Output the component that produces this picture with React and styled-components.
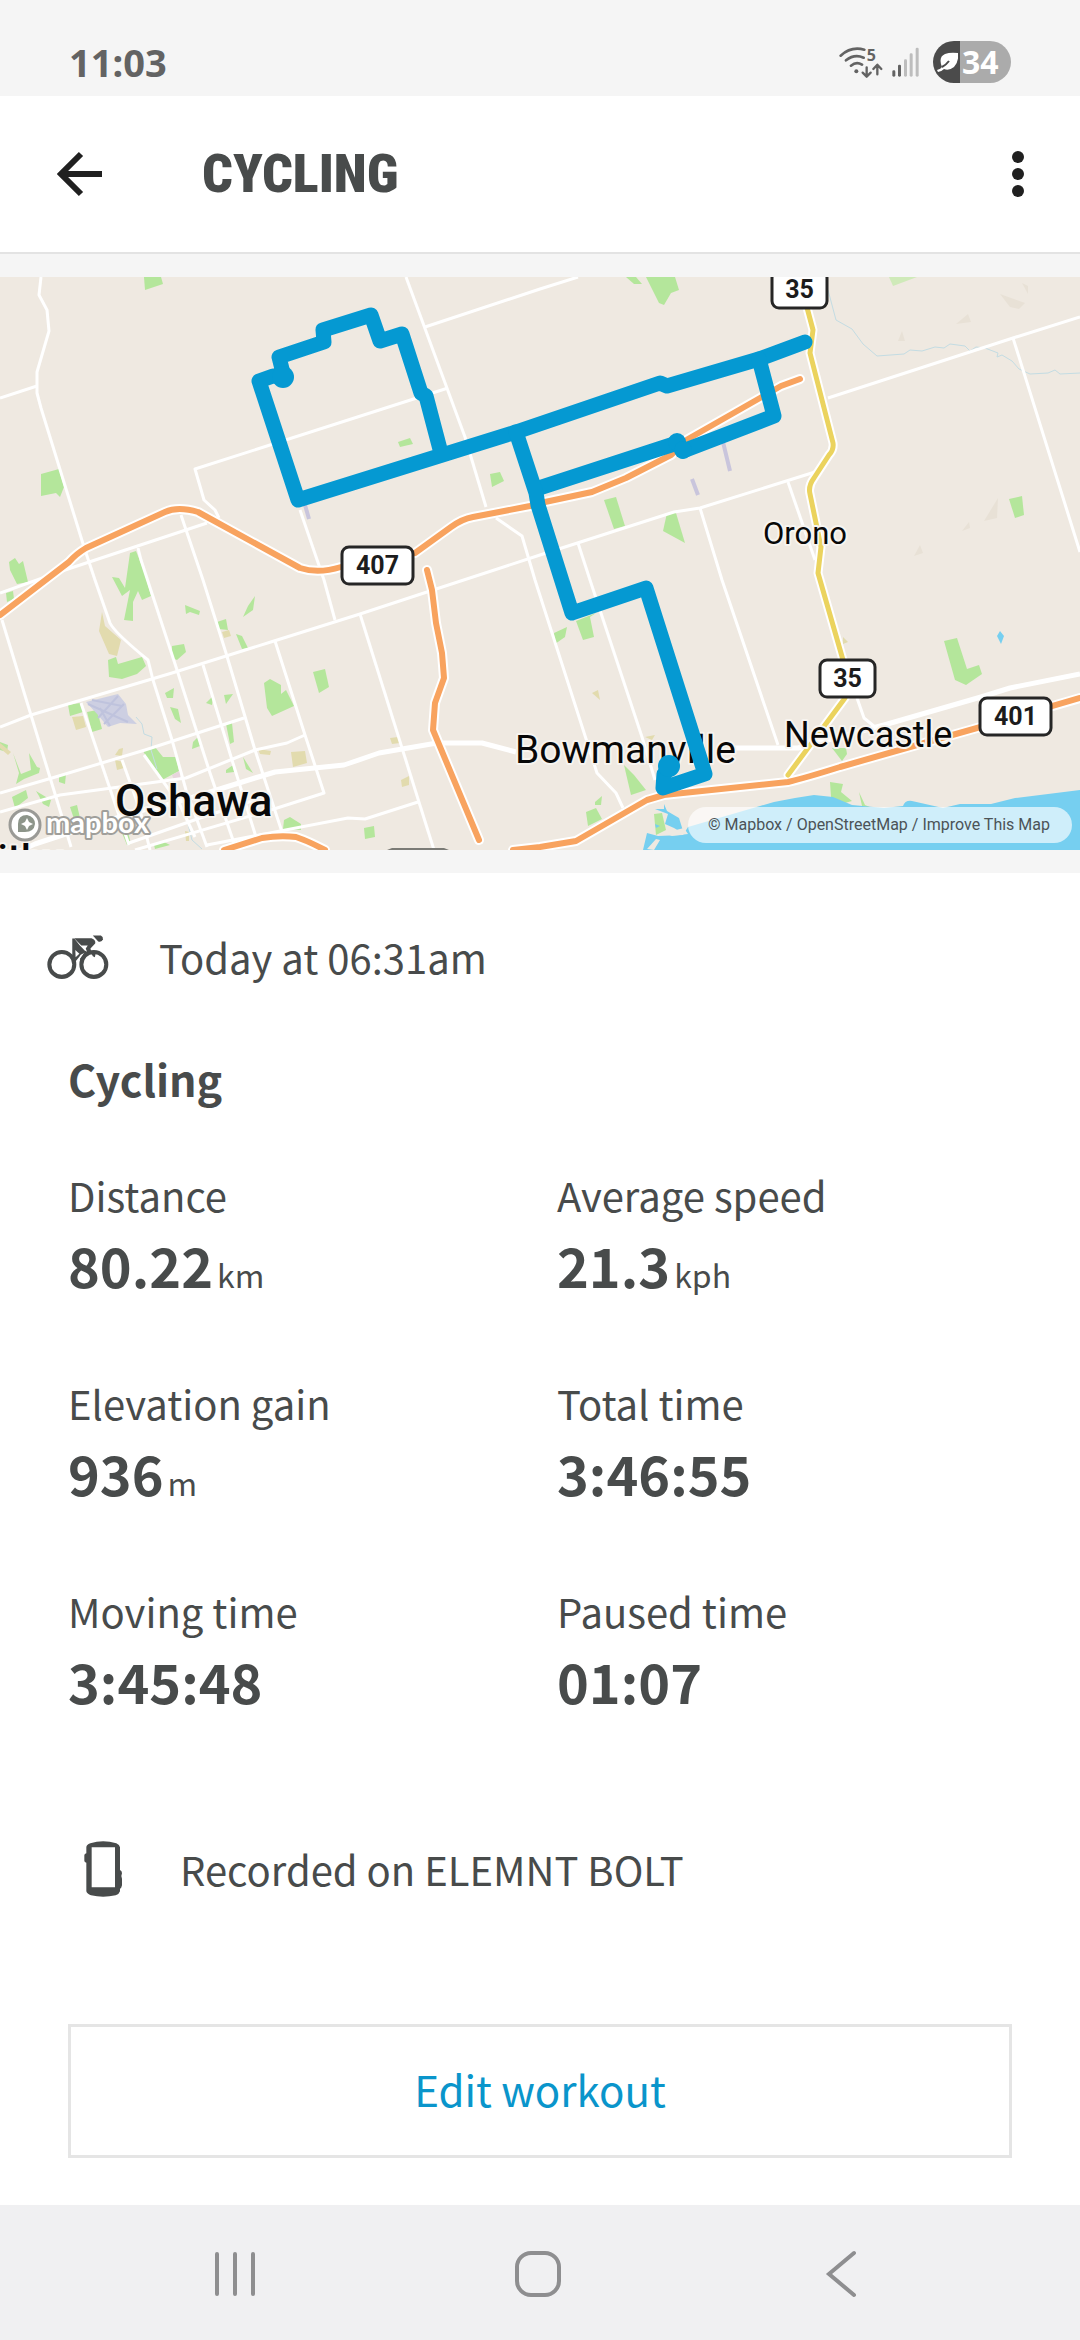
import React from 'react';
import styled, { createGlobalStyle } from 'styled-components';

const GlobalStyle = createGlobalStyle`
  * {
    box-sizing: border-box;
  }

  body {
    margin: 0;
    background-color: #fff;
    color: #484b4b;
    font-family: 'Noto Sans CJK SC', 'Noto Sans', sans-serif;
  }
`;

const Page = styled.div`
  min-height: 100vh;
  display: flex;
  flex-direction: column;
`;

const StatusBar = styled.div`
  height: 96px;
  padding: 28px 69px 0;
  display: flex;
  justify-content: space-between;
  align-items: center;
  background-color: #f5f5f5;
  color: #636363;
  font-family: 'Noto Sans', sans-serif;
`;

const Clock = styled.span`
  font-size: 38px;
  line-height: 48px;
  font-weight: 700;
`;

const StatusIcons = styled.div`
  display: flex;
  align-items: center;
`;

const WifiIcon = styled.svg`
  width: 44px;
  height: 33px;
  margin-right: 9px;
`;

const SignalIcon = styled.svg`
  width: 27px;
  height: 30px;
  margin-right: 14px;
`;

const Battery = styled.div`
  width: 78px;
  height: 42px;
  padding-left: 4px;
  display: flex;
  align-items: center;
  gap: 4px;
  border-radius: 21px;
  background: linear-gradient(to right, #4b4b4b 34%, #ababab 34%);
  color: #fff;
  font-size: 32px;
  line-height: 42px;
  font-weight: 700;

  svg {
    width: 21px;
    height: 20px;
  }
`;

const Header = styled.header`
  height: 158px;
  padding: 0 42px;
  display: flex;
  align-items: center;
  background-color: #fff;
  border-bottom: 2px solid #e3e3e3;
`;

const IconButton = styled.button`
  width: 76px;
  height: 76px;
  padding: 0;
  display: flex;
  justify-content: ${(props) => props.$align || 'center'};
  align-items: center;
  background: none;
  border: none;
  cursor: pointer;
`;

const Title = styled.h1`
  flex: 1;
  margin: 0 0 0 84px;
  color: #484b4b;
  font-family: 'Roboto Condensed', 'Liberation Sans Narrow', Roboto, sans-serif;
  font-size: 54px;
  line-height: 64px;
  font-weight: 900;
`;

const MapFrame = styled.section`
  position: relative;
  border-top: 23px solid #f5f5f5;
  border-bottom: 23px solid #f5f5f5;
`;

const MapDrawing = styled.svg`
  display: block;
  width: 100%;
`;

const Attribution = styled.nav`
  position: absolute;
  right: 8px;
  bottom: 7px;
  height: 36px;
  padding: 0 22px 0 20px;
  display: flex;
  align-items: center;
  gap: 4px;
  border-radius: 18px;
  background-color: rgba(255, 255, 255, 0.65);
  color: #4c5357;
  font-family: Roboto, sans-serif;
  font-size: 16px;
  line-height: 36px;

  a {
    color: inherit;
    text-decoration: none;
  }
`;

const Content = styled.main`
  padding: 60px 68px 46px;
  font-size: 40px;
  line-height: 48px;
`;

const DateRow = styled.div`
  height: 48px;
  display: flex;
  align-items: center;
  gap: 50px;
  margin-left: -21px;

  svg {
    width: 62px;
    height: 44px;
  }
`;

const WorkoutName = styled.h2`
  margin: 73px 0 69px;
  font-size: 43px;
  line-height: 48px;
  font-weight: 700;
`;

const Stats = styled.dl`
  margin: 0;
  display: grid;
  grid-template-columns: 1fr 1fr;
  gap: 84px 34px;
`;

const StatLabel = styled.dt`
  margin-bottom: 16px;
`;

const StatValue = styled.dd`
  margin: 0;
  display: flex;
  align-items: baseline;
  gap: 4px;
  height: 60px;
  font-size: 54px;
  line-height: 60px;
  font-weight: 700;
`;

const Unit = styled.span`
  font-size: 32px;
  font-weight: 400;
`;

const DeviceRow = styled.div`
  height: 56px;
  margin: 130px 0 127px;
  padding-left: 16px;
  display: flex;
  align-items: center;
  gap: 58px;

  svg {
    width: 38px;
    height: 56px;
  }
`;

const EditButton = styled.button`
  width: 100%;
  height: 134px;
  padding: 0 0 4px;
  background-color: #fff;
  border: 3px solid #e5e5e5;
  color: #0a95cb;
  font-family: inherit;
  font-size: 42px;
  line-height: 48px;
  cursor: pointer;
`;

const NavBar = styled.nav`
  height: 135px;
  margin-top: auto;
  padding: 2px 88px 0 84px;
  display: grid;
  grid-template-columns: repeat(3, 1fr);
  justify-items: center;
  align-items: center;
  background-color: #f0f0f2;
`;

const parks = [
  '144,277 161,277 163,284 145,290',
  '41,474 59,469 64,487 60,497 56,493 41,496',
  '398,442 410,438 413,444 400,447',
  '490,474 500,472 504,481 492,487',
  '626,277 636,277 642,284 634,284',
  '646,277 675,277 679,290 671,293 664,305 659,303',
  '604,500 616,497 625,526 614,529',
  '667,513 676,513 685,543 663,531',
  '1009,499 1022,496 1024,515 1015,518',
  '9,562 15,558 19,564 23,561 28,582 17,584 10,570',
  '6,593 13,591 14,599 7,602',
  '130,553 136,551 144,571 151,596 142,600 138,591 133,602 133,621 124,620 130,590 122,596 112,577 119,578 125,588',
  '172,646 184,644 186,652 177,660 172,658',
  '185,605 200,611 199,615 190,612 186,614',
  '255,596 253,610 243,617 248,606',
  '217,622 226,619 228,630 219,629',
  '236,634 242,636 248,648 242,649',
  '108,660 116,657 118,664 142,657 146,666 137,674 122,679 109,677',
  '165,693 174,688 173,698 167,698',
  '170,707 178,709 181,723 175,719',
  '224,695 233,694 226,704',
  '206,703 213,696 212,705',
  '264,683 270,679 281,685 281,694 286,690 294,706 272,716 267,708',
  '313,672 325,669 329,687 319,693',
  '68,705 80,703 83,712 70,716',
  '87,712 97,710 102,729 92,732',
  '226,724 232,723 234,742 230,744',
  '193,742 198,737 200,746 192,749',
  '143,751 155,747 163,757 176,757 179,771 162,780 157,775',
  '226,770 233,765 234,772 226,773',
  '243,757 253,773 246,769',
  '284,820 290,817 301,824 301,830 283,829',
  '364,828 374,826 375,837 365,839',
  '0,742 8,745 7,752 0,750',
  '13,753 21,774 31,770 29,753 37,767 40,768 39,773 24,779 16,784 19,773',
  '36,791 51,800 49,807 43,804 39,796',
  '12,797 26,790 28,798 15,808',
  '59,775 66,774 65,784 59,782',
  '70,807 77,805 80,818 74,819',
  '122,833 128,832 131,844 127,845',
  '154,845 164,842 170,845 155,849',
  '554,633 567,627 565,637 555,644',
  '576,621 596,613 590,617 594,637 583,640',
  '944,641 957,638 967,669 979,665 982,674 966,685 955,680',
  '624,765 634,775 646,790 631,795',
  '595,802 602,796 601,805 595,805',
  '586,812 596,808 602,819 588,826',
  '654,814 662,813 666,830 656,835',
  '830,782 843,784 841,792 852,801 838,805 831,797',
  '832,748 846,748 847,754 842,761',
  '859,792 865,805 872,808 862,806',
];

const fields = [
  '102,612 105,626 121,640 117,656 109,654 99,631',
  '222,632 229,630 231,636 224,638',
  '72,717 83,716 86,727 76,730',
  '115,760 124,762 124,768 117,770',
  '119,749 123,748 122,756 115,755',
  '258,749 271,751 270,755 260,754',
  '291,752 305,751 307,763 293,767',
  '390,738 398,737 400,743 392,744',
  '401,780 409,776 409,785 402,787',
  '185,831 189,832 189,841 186,841',
  '0,743 11,752 8,755 0,748',
  '592,693 598,690 600,700',
  '645,737 655,735 652,740',
  '843,637 848,642 843,644',
];

const hills = [
  '1000,294 1025,303 1019,309 1010,307',
  '1022,283 1028,286 1028,294',
  '956,324 968,314 971,322',
  '898,341 902,331 905,341',
  '984,521 998,498 997,518',
  '962,531 969,522 970,528',
  '914,556 920,545 923,553',
];

const minorRoads = [
  'M41 277L39 295L47 310L49 331L37 372V393L41 408L84 547L95 580L110 623Q114 632 148 660L153 680L172 740L186 790L207 847',
  'M0 398L37 386',
  'M406 277L465 437L486 507',
  'M425 327L540 289L578 277',
  'M448 388L195 469L204 500L215 510L219 518',
  'M0 593L65 570L207 523',
  'M181 515L203 580L226 653L255 750L282 832',
  'M138 548L141 560L177 670L210 773L234 843',
  'M300 510L324 580L335 620',
  'M0 727L31 715L172 673L274 641L360 614L427 592L540 555L674 512L700 508L815 472',
  'M2 620L59 807L71 847',
  'M203 665L232 760L256 837',
  'M275 641L305 735L324 793L274 809L135 850',
  'M360 614L434 850',
  'M0 793L52 778L145 750L244 718',
  'M81 703L129 845',
  'M122 760L140 810L150 850',
  'M0 812L60 795L186 778L255 750L287 743L305 735',
  'M207 845L348 818L365 819L418 802',
  'M129 843L200 818L255 800',
  'M144 755L180 805L195 837',
  'M1080 317L1013 338L828 398',
  'M1013 338L1080 552',
  'M788 482L815 560',
  'M700 508L722 580L778 745',
  'M578 543L590 580L642 737L655 780',
  'M496 518L522 536L535 580L597 773L616 793L623 808',
  'M857 698L864 718L875 727',
];

const arterials = [
  'M150 810L207 793L255 778L275 772L344 765L379 753L437 743H482L516 752',
  'M733 748H798L884 725L981 697L1010 688L1080 674',
  'M0 860L35 844L90 826L150 808',
];

const highways = [
  'M0 615L69 562Q76 554 86 548L165 512Q178 506 198 512L300 568Q318 574 341 567',
  'M415 553L451 527Q462 519 473 517L530 506L545 502L592 492L626 478L671 455L688 439L760 398L781 386L800 379',
  'M427 570L432 590L436 623L442 653L444 678L435 703L433 730L479 840',
  'M224 850L262 838Q280 835 296 837Q308 841 325 850',
  'M513 850L540 847L576 841L647 800L664 795L788 782Q805 778 840 767L910 747L977 728L1080 698',
];

const regional = 'M805 300L813 330L810 353L833 443Q834 450 829 455L814 478Q808 486 810 494L821 547L818 573L843 660L845 698L788 775';

const route = [
  'M805 342L759 359L667 386L660 383L516 432L298 500L259 381L273 376L284 377L279 357L324 342L323 330L371 315L380 341L402 334L421 393L426 396L441 453',
  'M759 359L774 416L683 451L677 442L671 445L536 489',
  'M516 432L536 493L538 505L572 613L646 588L705 774L663 788L664 774L672 766',
];

const shields = [
  { x: 772, y: 271, width: 55, label: '35' },
  { x: 342, y: 547, width: 71, label: '407' },
  { x: 820, y: 660, width: 55, label: '35' },
  { x: 980, y: 698, width: 71, label: '401' },
];

const places = [
  { name: 'Oshawa', x: 115, y: 816, size: 44, weight: 500 },
  { name: 'Bowmanville', x: 515, y: 763, size: 39, weight: 400 },
  { name: 'Newcastle', x: 784, y: 747, size: 36, weight: 400 },
  { name: 'Orono', x: 763, y: 544, size: 31, weight: 400 },
  { name: 'Whitby', x: -60, y: 873, size: 40, weight: 500 },
];

const stats = [
  { label: 'Distance', value: '80.22', unit: 'km' },
  { label: 'Average speed', value: '21.3', unit: 'kph' },
  { label: 'Elevation gain', value: '936', unit: 'm' },
  { label: 'Total time', value: '3:46:55' },
  { label: 'Moving time', value: '3:45:48' },
  { label: 'Paused time', value: '01:07' },
];

const RouteMap = () => (
  <MapDrawing viewBox="0 277 1080 573" role="img" aria-label="Route map" fontFamily="Roboto, sans-serif">
    <rect x="0" y="277" width="1080" height="573" fill="#efe9e1" />
    {hills.map((points) => <polygon key={points} points={points} fill="#e8e1d6" />)}
    {parks.map((points) => <polygon key={points} points={points} fill="#b4e69b" />)}
    {fields.map((points) => <polygon key={points} points={points} fill="#e2dbae" />)}
    <polygon points="889,277 917,277 893,286" fill="#cfeab9" />
    <path d="M86 702L118 694L126 704L128 715L137 724L120 723L108 727L98 715Z" fill="#cdcfe2" />
    <path d="M88 704L128 722M98 718L118 696M104 724L124 704M92 700L122 706M100 708L110 726" stroke="#bfc3dd" strokeWidth="2" fill="none" />
    <polygon points="172,775 181,770 180,778 174,780" fill="#e8d5dc" />
    <path d="M305 505L309 519M723 442L730 471M692 479L698 495" stroke="#c9c5dc" strokeWidth="4" fill="none" />
    <g stroke="#c3dce3" strokeWidth="1" fill="none">
      <path d="M828 290L836 320L852 329L863 344L877 356L904 354L910 350L922 351L935 347L944 348L950 344L965 346L970 351L976 347L985 348L998 353L997 357L1002 355L1012 361L1019 369L1030 374L1048 373L1055 370L1060 374L1080 373" />
      <path d="M136 717L142 724L144 734L152 737L151 750L157 769M187 820L192 840L202 849" />
    </g>
    <path d="M643 850L647 833L658 836L683 835L688 827L760 806L774 802L795 798L814 795L833 797L852 805L884 808L903 806Q905 800 912 801L943 808L960 804L991 804L1015 798L1080 790V850Z" fill="#76cff0" />
    <path d="M664 804L667 811L679 818L684 834L674 828L665 824L668 814L655 809H664ZM1000 631L1004 636L1001 644L997 636ZM655 824L660 826L656 828" fill="#76cff0" />
    <path d="M647 849L656 839L660 840L654 850ZM664 833L684 828L688 834L672 836Z" fill="#efe9e1" />
    <g fill="none" stroke="#fff" strokeLinejoin="round">
      {minorRoads.map((d) => <path key={d} d={d} strokeWidth="3" />)}
      {arterials.map((d) => <path key={d} d={d} strokeWidth="5" />)}
      {highways.map((d) => <path key={d} d={d} strokeWidth="10" strokeLinecap="round" />)}
      <path d={regional} strokeWidth="9" strokeLinecap="round" />
    </g>
    <g fill="none" strokeLinejoin="round" strokeLinecap="round">
      <path d={regional} stroke="#ebd35e" strokeWidth="5" />
      {highways.map((d) => <path key={d} d={d} stroke="#f8a35f" strokeWidth="6" />)}
    </g>
    <path d="M387 850L392 848H444L449 850Z" fill="#7b7b76" />
    {shields.map(({ x, y, width, label }) => (
      <g key={x}>
        <rect x={x} y={y} width={width} height="37" rx="7" fill="#fff" stroke="#262626" strokeWidth="3" />
        <text x={x + width / 2} y={y + 27} fontSize="25" fontWeight="700" textAnchor="middle" fill="#1c1c1c">{label}</text>
      </g>
    ))}
    {places.map(({ name, x, y, size, weight }) => (
      <text key={name} x={x} y={y} fontSize={size} fontWeight={weight} fill="#080808" stroke="#f7f4ef" strokeWidth="4" strokeLinejoin="round" paintOrder="stroke">
        {name}
      </text>
    ))}
    <g fill="none" stroke="#0599d2" strokeWidth="15" strokeLinecap="round" strokeLinejoin="round">
      {route.map((d) => <path key={d} d={d} />)}
    </g>
    <g fill="#0599d2">
      <circle cx="283" cy="377" r="11" />
      <circle cx="677" cy="442" r="9" />
      <circle cx="683" cy="450" r="9" />
      <circle cx="669" cy="766" r="11" />
    </g>
    <circle cx="25" cy="825" r="15" fill="#fff" stroke="#9a9a96" strokeWidth="3" />
    <path d="M18 832V824Q18 815 27 815Q35 817 35 824Q34 832 25 832Z" fill="#8d958a" />
    <path d="M27 818L29 822L33 824L29 826L27 830L25 826L21 824L25 822Z" fill="#fff" />
    <text x="46" y="833" fontFamily="Lato, sans-serif" fontSize="29" fontWeight="700" fill="#fff" stroke="#a09f9b" strokeWidth="4" strokeLinejoin="round" paintOrder="stroke">mapbox</text>
  </MapDrawing>
);

const Wifi = () => (
  <WifiIcon viewBox="28 48 132 99" fill="none" stroke="#636363" strokeWidth="8" strokeLinecap="round">
    <path d="M33 77Q64 48 104 59M49 91Q74 71 102 83M64 107Q80 94 97 104" />
    <circle cx="80" cy="124" r="6" fill="#636363" stroke="none" />
    <path d="M111 112V139M99 128L111 140L123 128M143 133V106M131 117L143 104L155 117" strokeWidth="7" strokeLinejoin="round" />
    <text x="111" y="92" fontSize="48" fontWeight="700" fill="#636363" stroke="none">5</text>
  </WifiIcon>
);

const Signal = () => (
  <SignalIcon viewBox="186 49 81 90">
    <rect x="187" y="119" width="9" height="19" rx="4" fill="#636363" />
    <rect x="204" y="102" width="9" height="36" rx="4" fill="#636363" />
    <rect x="222" y="86" width="9" height="52" rx="4" fill="#bdbdbd" />
    <rect x="239" y="68" width="9" height="70" rx="4" fill="#bdbdbd" />
    <rect x="257" y="51" width="9" height="87" rx="4" fill="#bdbdbd" />
  </SignalIcon>
);

const Cyclist = () => (
  <svg viewBox="22 32 184 130" aria-hidden="true">
    <g fill="none" stroke="#484b4b" strokeWidth="12">
      <circle cx="66" cy="119" r="37" />
      <circle cx="161" cy="119" r="37" />
    </g>
    <path d="M97 42H103L119 62L138 82L122 90L118 96L103 115L97 100Z" fill="#484b4b" />
    <path d="M106 76L118 87L107 98Z" fill="#fff" />
    <path d="M103 41H154Q168 46 165 57L151 72L153 80L166 89L164 98L158 95L155 89L141 82L137 72L143 63H124L104 43Z" fill="#484b4b" />
    <path d="M139 80L131 93L122 106" stroke="#484b4b" strokeWidth="7" fill="none" />
    <path d="M158 33H182Q189 36 188 44Q184 55 174 51Z" fill="#484b4b" />
  </svg>
);

const BikeComputer = () => (
  <svg viewBox="43 19 114 168" aria-hidden="true">
    <path fill="#484b4b" fillRule="evenodd" d="M50 38Q50 30 62 26Q100 14 140 26Q150 30 151 38V106Q157 108 157 116L155 124L157 132V152Q155 162 151 162V170Q149 178 138 182Q100 190 64 182Q52 178 50 170V84Q44 82 44 78V62Q44 58 50 56ZM66 38V158H136V38Z" />
  </svg>
);

const App = () => {
  return (
    <Page>
      <GlobalStyle />
      <StatusBar>
        <Clock>11:03</Clock>
        <StatusIcons>
          <Wifi />
          <Signal />
          <Battery>
            <svg viewBox="0 0 21 20" aria-hidden="true">
              <path d="M0 18Q4 17 5 15Q1 5 8 2Q13 0 21 1Q22 10 17 15Q12 19 7 17Q4 20 1 20Z" fill="#fff" />
              <path d="M5 15Q9 13 12 9" stroke="#4b4b4b" strokeWidth="2" fill="none" />
            </svg>
            <span>34</span>
          </Battery>
        </StatusIcons>
      </StatusBar>

      <Header>
        <IconButton aria-label="Back" $align="flex-start">
          <svg width="76" height="60" viewBox="0 0 76 60" fill="none" stroke="#202020" strokeWidth="6">
            <path d="M60 30H19M39 10L19 30L39 50" />
          </svg>
        </IconButton>
        <Title>CYCLING</Title>
        <IconButton aria-label="More options" $align="flex-end">
          <svg width="40" height="60" viewBox="0 0 40 60" fill="#202020">
            <circle cx="20" cy="13" r="6" />
            <circle cx="20" cy="30" r="6" />
            <circle cx="20" cy="47" r="6" />
          </svg>
        </IconButton>
      </Header>

      <MapFrame>
        <RouteMap />
        <Attribution>
          <a href="#mapbox">© Mapbox</a>/
          <a href="#osm">OpenStreetMap</a>/
          <a href="#improve">Improve This Map</a>
        </Attribution>
      </MapFrame>

      <Content>
        <DateRow>
          <Cyclist />
          <span>Today at 06:31am</span>
        </DateRow>
        <WorkoutName>Cycling</WorkoutName>
        <Stats>
          {stats.map(({ label, value, unit }) => (
            <div key={label}>
              <StatLabel>{label}</StatLabel>
              <StatValue>
                {value}
                {unit && <Unit>{unit}</Unit>}
              </StatValue>
            </div>
          ))}
        </Stats>
        <DeviceRow>
          <BikeComputer />
          <span>Recorded on ELEMNT BOLT</span>
        </DeviceRow>
        <EditButton>Edit workout</EditButton>
      </Content>

      <NavBar>
        <IconButton aria-label="Recent apps">
          <svg width="48" height="48" viewBox="0 0 48 48" stroke="#8e8e90" strokeWidth="4" strokeLinecap="round">
            <path d="M6 4V44M24 4V44M42 4V44" />
          </svg>
        </IconButton>
        <IconButton aria-label="Home">
          <svg width="48" height="48" viewBox="0 0 48 48" fill="none" stroke="#8e8e90" strokeWidth="4">
            <rect x="3" y="3" width="42" height="42" rx="14" />
          </svg>
        </IconButton>
        <IconButton aria-label="Go back">
          <svg width="48" height="48" viewBox="0 0 48 48" fill="none" stroke="#8e8e90" strokeWidth="4" strokeLinecap="round">
            <path d="M37 3L12 24L37 45" />
          </svg>
        </IconButton>
      </NavBar>
    </Page>
  );
};

export default App;
